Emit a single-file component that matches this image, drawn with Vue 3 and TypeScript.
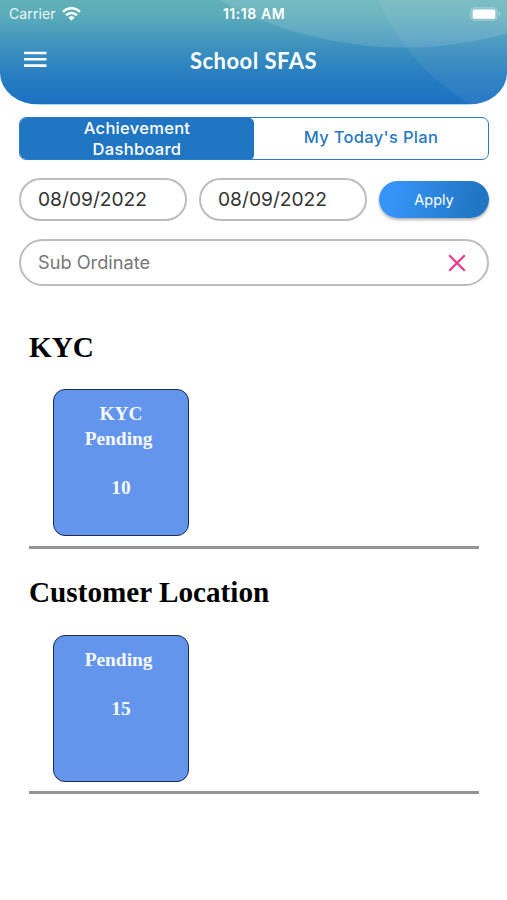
<script setup lang="ts">
import { ref } from 'vue'

interface Section {
  title: string
  label: string
  count: number
}

const tabs: string[] = ['Achievement Dashboard', "My Today's Plan"]
const activeTab = ref(0)
const dates = ref<string[]>(['08/09/2022', '08/09/2022'])
const sections: Section[] = [
  { title: 'KYC', label: 'KYC Pending', count: 10 },
  { title: 'Customer Location', label: 'Pending', count: 15 },
]
</script>

<template>
  <div class="screen">
    <header class="header">
      <svg class="waves" viewBox="0 0 507 105" aria-hidden="true">
        <circle cx="404" cy="-337.5" r="385" fill="#fff" fill-opacity="0.12" />
        <circle cx="588.6" cy="-93.6" r="230.5" fill="#fff" fill-opacity="0.06" />
      </svg>
      <div class="status">
        <div class="carrier">
          <span>Carrier</span>
          <svg width="19" height="14" viewBox="0 0 19 14" fill="none" stroke="#fff" stroke-width="2.6">
            <path d="M1 4.9C5.8 0 13.2 0 18 4.9" />
            <path d="M4.1 8.2c3.1-3 7.7-3 10.8 0" />
            <path d="M9.5 13.7 6.4 10.6c1.8-1.7 4.4-1.7 6.2 0z" fill="#fff" stroke="none" />
          </svg>
        </div>
        <span class="time">11:18 AM</span>
        <svg class="battery" width="31" height="14" viewBox="0 0 31 14">
          <rect x=".7" y=".7" width="26.6" height="12.6" rx="3.6" fill="#fff" fill-opacity=".14" stroke="#fff" stroke-opacity=".26" />
          <rect x="2.7" y="2.5" width="22.6" height="9.3" rx="1.6" fill="#fff" />
          <path d="M28.8 4.8c2 .8 2 3.6 0 4.4z" fill="#fff" fill-opacity=".4" />
        </svg>
      </div>
      <div class="bar">
        <button class="menu" aria-label="Menu">
          <svg width="23" height="17" viewBox="0 0 23 17" stroke="#fff" stroke-width="2.6">
            <path d="M0 2h22.5M0 8.3h22.5M0 14.6h22.5" />
          </svg>
        </button>
        <h1>School SFAS</h1>
      </div>
    </header>

    <main>
      <div class="tabs">
        <button
          v-for="(tab, i) in tabs"
          :key="tab"
          class="tab"
          :class="{ active: activeTab === i }"
          @click="activeTab = i"
        >
          <span>{{ tab }}</span>
        </button>
      </div>

      <div class="filters">
        <div v-for="(date, i) in dates" :key="i" class="field date">{{ date }}</div>
        <button class="apply">Apply</button>
      </div>

      <div class="field search">
        <span>Sub Ordinate</span>
        <svg width="18" height="18" viewBox="0 0 18 18" stroke="#ee3a8c" stroke-width="2.3">
          <path d="M1.2 1.2 16.8 16.8M16.8 1.2 1.2 16.8" />
        </svg>
      </div>

      <section v-for="s in sections" :key="s.title" class="section">
        <h2>{{ s.title }}</h2>
        <div class="card">
          <span class="label">{{ s.label }}&nbsp;</span>
          <span>{{ s.count }}</span>
        </div>
      </section>
    </main>
  </div>
</template>

<style>
body {
  background: #fff;
}
</style>

<style scoped>
.screen {
  width: 507px;
  height: 900px;
  overflow: hidden;
  background: #fff;
  font-family: Inter, 'Liberation Sans', sans-serif;
}
button {
  border: 0;
  padding: 0;
  background: none;
  font: inherit;
}
.header {
  position: relative;
  height: 105px;
  overflow: hidden;
  border-radius: 0 0 40px 40px / 0 0 32px 32px;
  background: linear-gradient(#62b1b8 0, #5bacb9 15px, #3b8fbf 50px, #287ec1 75px, #1d73c2 100px, #1d73c2 104px, #a5d6f5 104px);
  color: #fff;
}
.waves {
  position: absolute;
  inset: 0;
  width: 507px;
  height: 105px;
}
.status {
  position: relative;
  display: grid;
  grid-template-columns: 1fr auto 1fr;
  align-items: center;
  height: 27px;
  padding: 0 6px 0 9px;
  font-size: 14px;
}
.carrier {
  display: flex;
  align-items: center;
  gap: 6px;
  letter-spacing: 0.1px;
  color: #edf7fa;
}
.time {
  font-weight: 600;
  font-size: 14px;
  letter-spacing: 0.55px;
  margin-left: -2px;
}
.battery {
  justify-self: end;
}
.bar {
  position: relative;
  display: grid;
  grid-template-columns: 1fr auto 1fr;
  align-items: center;
  height: 68px;
  padding: 0 24px;
}
.menu {
  width: 23px;
  height: 17px;
  display: flex;
  margin-top: -3px;
}
h1 {
  margin: 0;
  font: 700 22px/28px Lato, sans-serif;
  letter-spacing: 0.5px;
}
main {
  padding: 12px 18px 0 19px;
}
.tabs {
  display: grid;
  grid-template-columns: 1fr 1fr;
  height: 43px;
  box-sizing: border-box;
  border: 1px solid #2b7dc5;
  border-radius: 7px;
  overflow: hidden;
}
.tab {
  display: flex;
  align-items: center;
  justify-content: center;
  color: #2678c0;
  font-size: 16.5px;
  font-weight: 500;
  line-height: 21px;
  letter-spacing: 0.3px;
  padding-bottom: 4px;
}
.tab.active {
  background: #2076c2;
  color: #fff;
  border-radius: 0 5px 5px 0;
  padding-bottom: 0;
}
.tab.active span {
  width: 130px;
}
.filters {
  display: flex;
  align-items: center;
  gap: 12px;
  margin-top: 18px;
}
.field {
  box-sizing: border-box;
  border: 2px solid #bdbdbd;
  border-radius: 24px;
  display: flex;
  align-items: center;
  padding: 0 17px;
}
.date {
  width: 168px;
  height: 43px;
  padding-bottom: 2px;
  color: #333;
  font-size: 19.2px;
}
.apply {
  width: 110px;
  height: 37px;
  margin-top: -1px;
  border-radius: 19px;
  background: linear-gradient(100deg, #3693f7 15%, #2076c2 88%);
  box-shadow: 0 2px 3px rgba(0, 0, 0, 0.3);
  color: #fff;
  font-size: 14.5px;
}
.search {
  margin-top: 18px;
  height: 47px;
  justify-content: space-between;
  padding: 0 21px 0 17px;
  color: #777;
  font-size: 18.2px;
}
.search span {
  margin-top: -2px;
}
.section {
  margin: 0 10px;
  height: 245.5px;
  box-sizing: border-box;
  border-bottom: 3px solid #949494;
  padding-top: 26.5px;
  font-family: 'Liberation Serif', serif;
  font-weight: 700;
}
.search + .section {
  margin-top: 17px;
}
h2 {
  margin: 0;
  font-size: 29.2px;
  line-height: 34px;
  color: #000;
}
.card {
  box-sizing: border-box;
  width: 136px;
  height: 147px;
  margin: 25.5px 0 0 24px;
  border: 1px solid #1c2c4c;
  border-radius: 12px;
  background: #6495ed;
  color: #f7faff;
  padding-top: 12px;
  display: flex;
  flex-direction: column;
  align-items: center;
  gap: 24.5px;
  font-size: 19.4px;
  line-height: 24.5px;
  text-align: center;
}
.label {
  width: 80px;
}
</style>
